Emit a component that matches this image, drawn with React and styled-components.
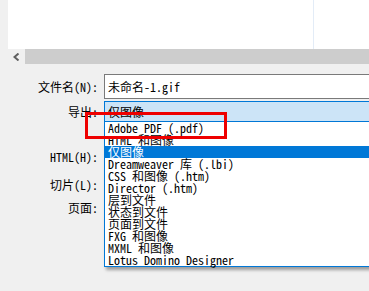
import styled, { createGlobalStyle } from "styled-components";

const GlobalStyle = createGlobalStyle`
  html, body {
    margin: 0;
    padding: 0;
    background: #f0f0f0;
    overflow: hidden;
  }
  body {
    font-family: "Noto Sans Mono CJK SC", "Liberation Mono", "Noto Sans CJK SC", monospace;
    font-size: 12px;
    color: #000;
  }
`;

const Page = styled.div`
  width: 369px;
  height: 291px;
  overflow: hidden;
`;

const Preview = styled.div`
  margin-left: 8px;
  height: 49px;
  background: #fff;
  display: flex;
`;

const PreviewPane = styled.div`
  width: 305px;
  border-right: 1px solid #e3ecf7;
`;

const ScrollBar = styled.div`
  display: flex;
  height: 15px;
  margin-left: 8px;
`;

const ArrowButton = styled.div`
  width: 17px;
  display: flex;
  align-items: center;
  justify-content: center;
`;

const Thumb = styled.div`
  flex: 1;
  background: #cdcdcd;
`;

const Form = styled.div`
  padding-top: 10px;
  display: flex;
  flex-direction: column;
`;

const Row = styled.div`
  display: flex;
  align-items: center;
  height: ${(p) => p.$h}px;
  margin-top: ${(p) => p.$top || 0}px;
`;

const Label = styled.div`
  width: 98px;
  padding-right: 6px;
  text-align: right;
  white-space: nowrap;
  line-height: 14px;
`;

const Input = styled.div`
  flex: 1;
  height: 23px;
  margin-right: -10px;
  background: #fff;
  border: 1px solid #7a7a7a;
  display: flex;
  align-items: center;
  padding-left: 3px;
`;

const Combo = styled.div`
  position: relative;
  flex: 1;
  height: 19px;
  margin-right: -10px;
  background: #cce4f7;
  border: 1px solid #0078d7;
  display: flex;
  align-items: center;
  padding-left: 3px;
`;

const List = styled.ul`
  position: absolute;
  left: -1px;
  right: 0;
  top: 20px;
  margin: 0;
  padding: 0;
  list-style: none;
  background: #fff;
  border-left: 1px solid #0078d7;
  border-bottom: 1px solid #0078d7;
  box-shadow: 2px 3px 3px rgba(0, 0, 0, 0.35);
  z-index: 2;
`;

const Item = styled.li`
  height: 12px;
  line-height: 12px;
  padding-left: 3px;
  white-space: nowrap;
  background: ${(p) => (p.$selected ? "#0078d7" : "transparent")};
  color: ${(p) => (p.$selected ? "#fff" : "#000")};
`;

const Highlight = styled.div`
  position: absolute;
  left: -20px;
  top: 10px;
  width: 136px;
  height: 21px;
  border: 3px solid #ee0000;
  z-index: 3;
  pointer-events: none;
`;

const items = [
  "Adobe PDF (.pdf)",
  "HTML 和图像",
  "仅图像",
  "Dreamweaver 库 (.lbi)",
  "CSS 和图像 (.htm)",
  "Director (.htm)",
  "层到文件",
  "状态到文件",
  "页面到文件",
  "FXG 和图像",
  "MXML 和图像",
  "Lotus Domino Designer",
];

export default function App() {
  return (
    <Page>
      <GlobalStyle />
      <Preview>
        <PreviewPane />
      </Preview>
      <ScrollBar>
        <ArrowButton>
          <svg width="7" height="8" viewBox="0 0 7 8">
            <polyline points="5.5,0.5 1.5,4 5.5,7.5" fill="none" stroke="#606060" strokeWidth="2" />
          </svg>
        </ArrowButton>
        <Thumb />
      </ScrollBar>
      <Form>
        <Row $h={25}>
          <Label>文件名(N):</Label>
          <Input>未命名-1.gif</Input>
        </Row>
        <Row $h={21} $top={2}>
          <Label>导出:</Label>
          <Combo>
            仅图像
            <List>
              {items.map((t) => (
                <Item key={t} $selected={t === "仅图像"}>
                  {t}
                </Item>
              ))}
            </List>
            <Highlight />
          </Combo>
        </Row>
        <Row $h={14} $top={28}>
          <Label>HTML(H):</Label>
        </Row>
        <Row $h={14} $top={14}>
          <Label>切片(L):</Label>
        </Row>
        <Row $h={14} $top={9}>
          <Label>页面:</Label>
        </Row>
      </Form>
    </Page>
  );
}
